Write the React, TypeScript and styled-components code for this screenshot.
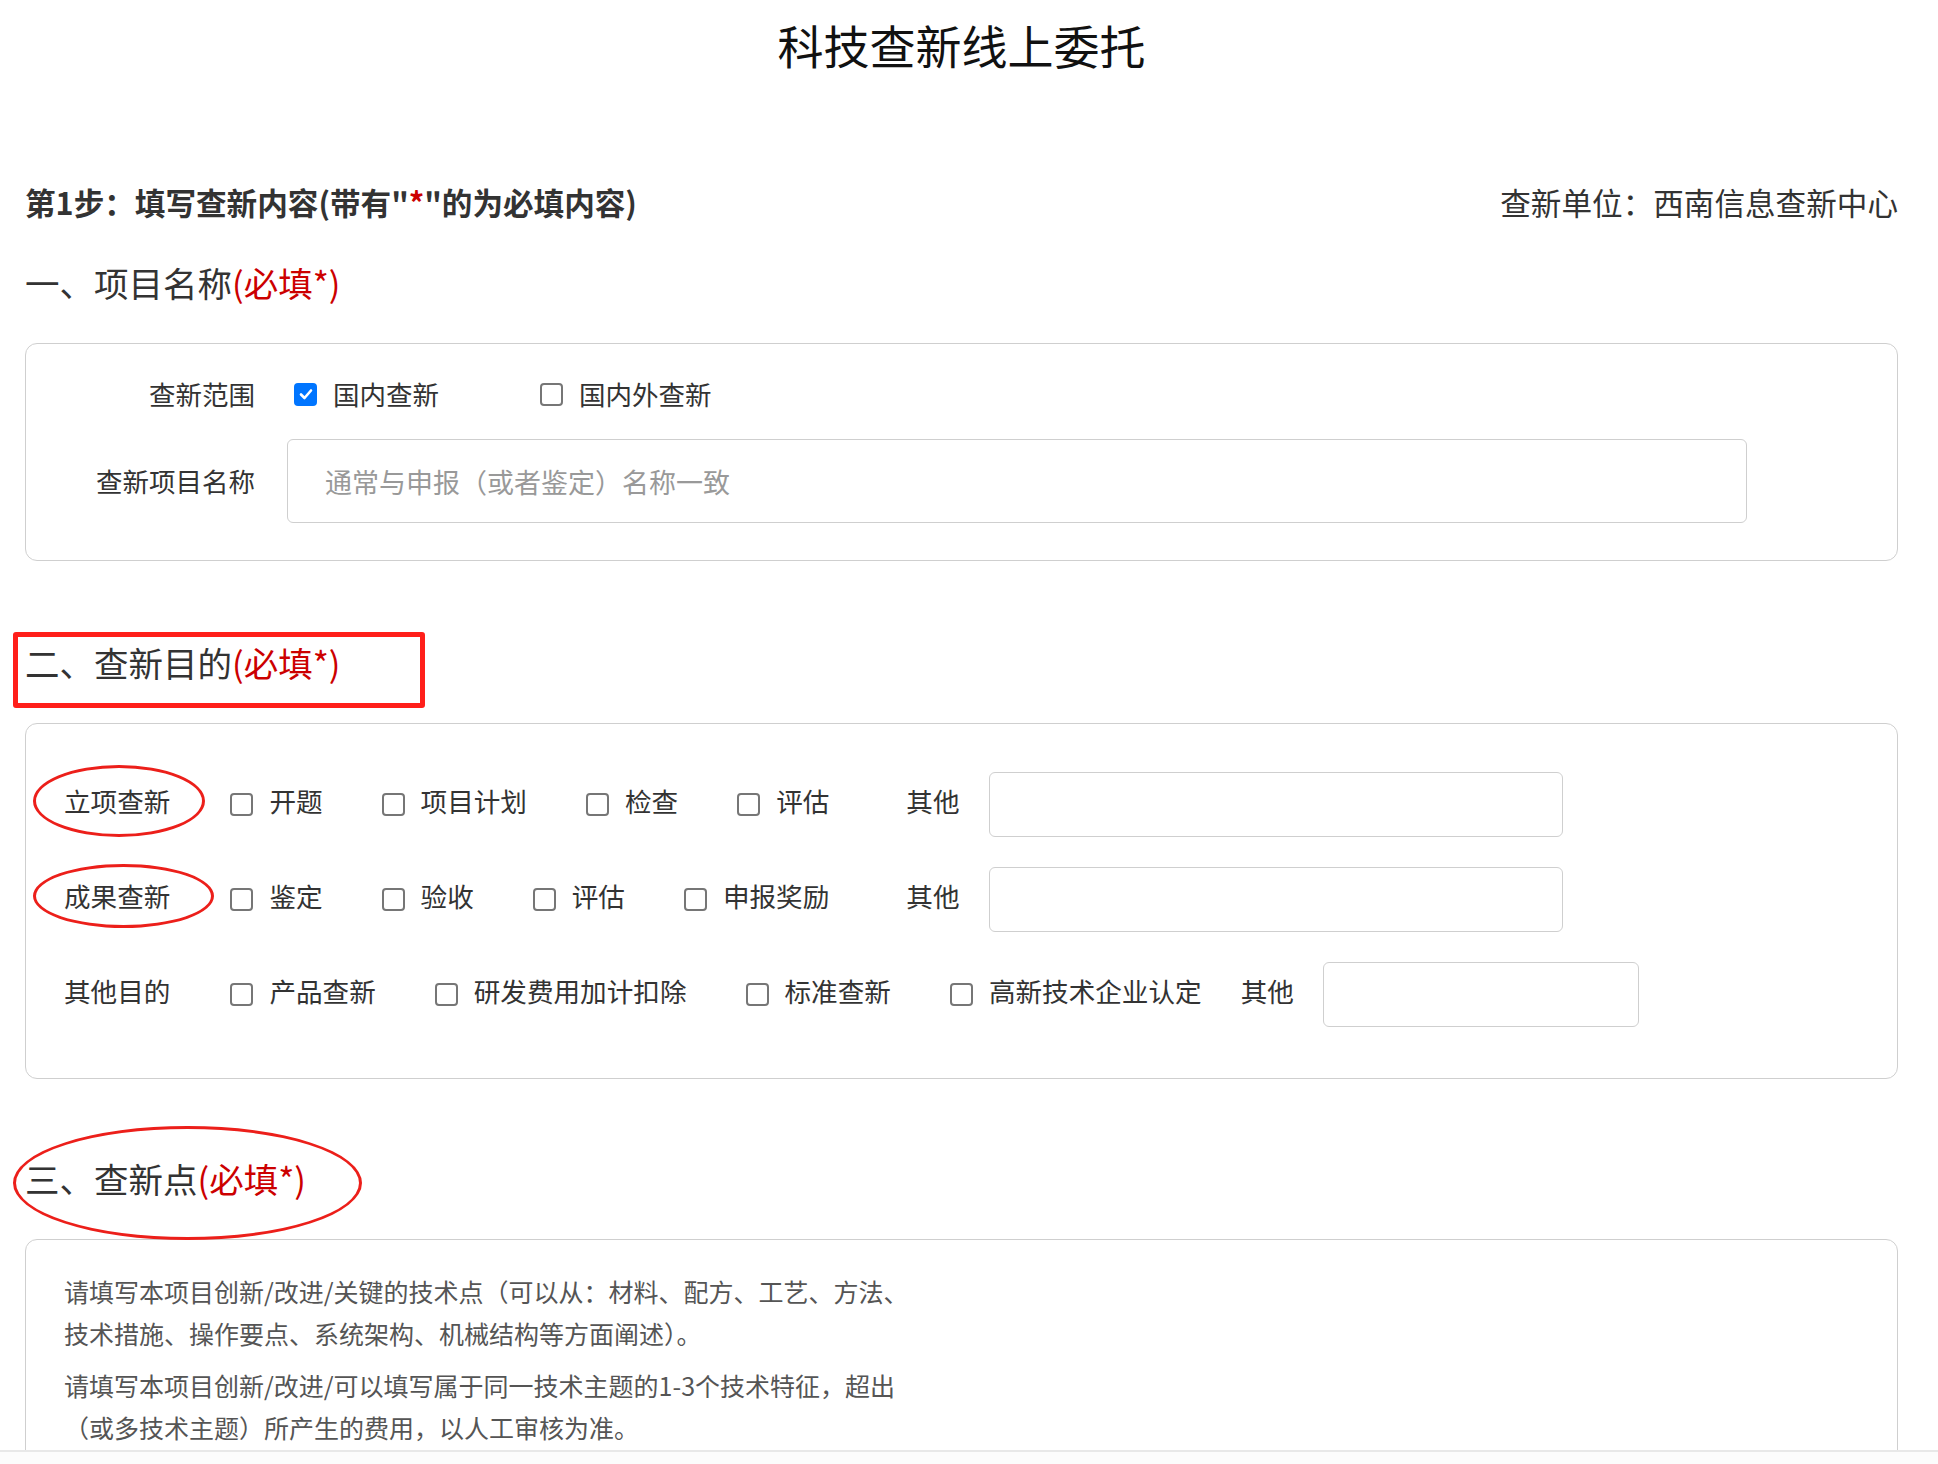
import React from "react";
import styled, { createGlobalStyle } from "styled-components";

const GlobalStyle = createGlobalStyle`
  html, body {
    margin: 0;
    padding: 0;
    background: #fff;
  }
  body {
    font-family: "Noto Sans CJK SC", "Noto Sans", sans-serif;
    color: #333;
  }
  * {
    box-sizing: border-box;
  }
`;

type OptionItem = { label: string; checked?: boolean; lift?: number };

const purposeRows: {
  label: string;
  mark?: { top: number; width: number; height: number };
  options: string[];
  otherGap: number;
  inputWidth: number;
}[] = [
  {
    label: "立项查新",
    mark: { top: -16, width: 172, height: 72 },
    options: ["开题", "项目计划", "检查", "评估"],
    otherGap: 77,
    inputWidth: 574,
  },
  {
    label: "成果查新",
    mark: { top: -12, width: 181, height: 64 },
    options: ["鉴定", "验收", "评估", "申报奖励"],
    otherGap: 77,
    inputWidth: 574,
  },
  {
    label: "其他目的",
    options: ["产品查新", "研发费用加计扣除", "标准查新", "高新技术企业认定"],
    otherGap: 39,
    inputWidth: 316,
  },
];

// checkbox drawn by hand, the native one is too small
const CheckOption: React.FC<OptionItem> = ({ label, checked, lift = 0 }) => (
  <Option>
    <Box $checked={checked}>
      {checked ? (
        <svg width="16" height="16" viewBox="0 0 16 16">
          <polyline
            points="3,8.5 6.5,12 13,4.5"
            fill="none"
            stroke="#fff"
            strokeWidth="2.6"
            strokeLinecap="round"
            strokeLinejoin="round"
          />
        </svg>
      ) : null}
    </Box>
    <OptionText $lift={lift}>{label}</OptionText>
  </Option>
);

const App: React.FC = () => {
  return (
    <>
      <GlobalStyle />
      <Viewport>
        <Page>
          <Title>科技查新线上委托</Title>

          <StepBar>
            <StepTitle>
              第1步：填写查新内容(带有"<Red>*</Red>"的为必填内容)
            </StepTitle>
            <Unit>查新单位：西南信息查新中心</Unit>
          </StepBar>

          {/* 一 */}
          <SectionTitle $gap={35}>
            一、项目名称<Red>(必填*)</Red>
          </SectionTitle>
          <Card>
            <ScopeBody>
              <FormRow>
                <FieldLabel>查新范围</FieldLabel>
                <ScopeOptions>
                  <CheckOption label="国内查新" checked />
                  <CheckOption label="国内外查新" />
                </ScopeOptions>
              </FormRow>
              <FormRow>
                <FieldLabel>查新项目名称</FieldLabel>
                <NameInput placeholder="通常与申报（或者鉴定）名称一致" />
              </FormRow>
            </ScopeBody>
          </Card>

          {/* 二 */}
          <SectionTitle $gap={76}>
            二、查新目的<Red>(必填*)</Red>
            <RectMark />
          </SectionTitle>
          <Card>
            <PurposeBody>
              {purposeRows.map((row) => (
                <PurposeRow key={row.label}>
                  <RowLabel>
                    {row.label}
                    {row.mark ? (
                      <EllipseMark
                        $top={row.mark.top}
                        $left={-31}
                        $width={row.mark.width}
                        $height={row.mark.height}
                      />
                    ) : null}
                  </RowLabel>
                  <OptionList>
                    {row.options.map((o) => (
                      <CheckOption key={o} label={o} lift={8} />
                    ))}
                  </OptionList>
                  <OtherLabel $gap={row.otherGap}>其他</OtherLabel>
                  <OtherInput style={{ width: row.inputWidth }} />
                </PurposeRow>
              ))}
            </PurposeBody>
          </Card>

          {/* 三 */}
          <SectionTitle $gap={74}>
            三、查新点<Red>(必填*)</Red>
            <EllipseMark $top={-27} $left={-12} $width={349} $height={114} />
          </SectionTitle>
          <Card>
            <HintBody>
              <Hint>
                请填写本项目创新/改进/关键的技术点（可以从：材料、配方、工艺、方法、
                <br />
                技术措施、操作要点、系统架构、机械结构等方面阐述）。
              </Hint>
              <Hint>
                请填写本项目创新/改进/可以填写属于同一技术主题的1-3个技术特征，超出
                <br />
                （或多技术主题）所产生的费用，以人工审核为准。
              </Hint>
              <PointsArea />
            </HintBody>
          </Card>
        </Page>
      </Viewport>
      <Footer />
    </>
  );
};

export default App;

const Viewport = styled.div`
  height: 1450px;
  overflow: hidden;
`;

const Page = styled.div`
  width: 1873px;
  margin-left: 25px;
`;

const Title = styled.h1`
  margin: 0;
  padding-top: 12px;
  font-size: 46px;
  line-height: 64px;
  font-weight: 400;
  text-align: center;
  color: #111;
`;

const StepBar = styled.div`
  display: flex;
  justify-content: space-between;
  align-items: center;
  margin-top: 106px;
  height: 40px;
`;

const StepTitle = styled.div`
  font-size: 30.6px;
  font-weight: 700;
  line-height: 40px;
  color: #333;
`;

const Unit = styled.div`
  font-size: 30.6px;
  line-height: 40px;
  color: #333;
`;

const Red = styled.span`
  color: #cc0000;
`;

const SectionTitle = styled.div<{ $gap: number }>`
  position: relative;
  width: max-content;
  margin-top: ${(p) => p.$gap}px;
  margin-bottom: 36px;
  font-size: 34.5px;
  line-height: 50px;
  color: #333;
`;

const RectMark = styled.span`
  position: absolute;
  top: -5px;
  left: -12px;
  width: 412px;
  height: 76px;
  border: 5px solid #ff1f1a;
  border-radius: 3px;
  pointer-events: none;
`;

const EllipseMark = styled.span<{
  $top: number;
  $left: number;
  $width: number;
  $height: number;
}>`
  position: absolute;
  top: ${(p) => p.$top}px;
  left: ${(p) => p.$left}px;
  width: ${(p) => p.$width}px;
  height: ${(p) => p.$height}px;
  border: 3px solid #ec1f1a;
  border-radius: 50%;
  pointer-events: none;
`;

const Card = styled.div`
  border: 1px solid #cfcfcf;
  border-radius: 12px;
  background: #fff;
`;

const ScopeBody = styled.div`
  padding: 30px 0 37px;
  display: flex;
  flex-direction: column;
  gap: 25px;
`;

const FormRow = styled.div`
  display: flex;
  align-items: center;
  min-height: 40px;
`;

const FieldLabel = styled.div`
  width: 229px;
  margin-right: 32px;
  text-align: right;
  font-size: 26.5px;
  line-height: 40px;
  color: #333;
`;

const ScopeOptions = styled.div`
  display: flex;
  align-items: center;
  gap: 101px;
  margin-left: 7px;
  font-size: 26.5px;
`;

const Option = styled.label`
  display: inline-flex;
  align-items: center;
  gap: 16px;
  color: #333;
  cursor: pointer;
`;

const OptionText = styled.span<{ $lift: number }>`
  line-height: 40px;
  padding-bottom: ${(p) => p.$lift}px;
`;

const Box = styled.span<{ $checked?: boolean }>`
  flex: none;
  width: 23px;
  height: 23px;
  border-radius: 4px;
  border: ${(p) => (p.$checked ? "none" : "2px solid #767676")};
  background: ${(p) => (p.$checked ? "#0075ff" : "#fff")};
  display: inline-flex;
  align-items: center;
  justify-content: center;
`;

const NameInput = styled.input`
  width: 1460px;
  height: 84px;
  padding: 0 37px;
  border: 1px solid #cfcfcf;
  border-radius: 6px;
  font-family: inherit;
  font-size: 27px;
  color: #333;
  outline: none;

  &::placeholder {
    color: #999;
  }
`;

const PurposeBody = styled.div`
  padding: 48px 0 51px 38px;
  display: flex;
  flex-direction: column;
  gap: 30px;
`;

const PurposeRow = styled.div`
  display: flex;
  align-items: center;
  height: 65px;
  font-size: 26.6px;
`;

const RowLabel = styled.span`
  position: relative;
  line-height: 40px;
  padding-bottom: 8px;
  margin-right: 60px;
  color: #333;
`;

const OptionList = styled.div`
  display: flex;
  align-items: center;
  gap: 59px;
`;

const OtherLabel = styled.span<{ $gap: number }>`
  margin-left: ${(p) => p.$gap}px;
  margin-right: 29px;
  line-height: 40px;
  padding-bottom: 8px;
  color: #333;
`;

const OtherInput = styled.input`
  height: 65px;
  border: 1px solid #cfcfcf;
  border-radius: 6px;
  font-family: inherit;
  font-size: 26px;
  padding: 0 16px;
  outline: none;
`;

const HintBody = styled.div`
  padding: 30px 38px 40px;
  display: flex;
  flex-direction: column;
  gap: 10px;
`;

const Hint = styled.p`
  margin: 0;
  font-size: 25px;
  line-height: 42px;
  color: #555;
`;

const PointsArea = styled.div`
  height: 260px;
`;

const Footer = styled.div`
  height: 14px;
  border-top: 2px solid #e8e8e8;
  background: #fcfcfc;
`;
